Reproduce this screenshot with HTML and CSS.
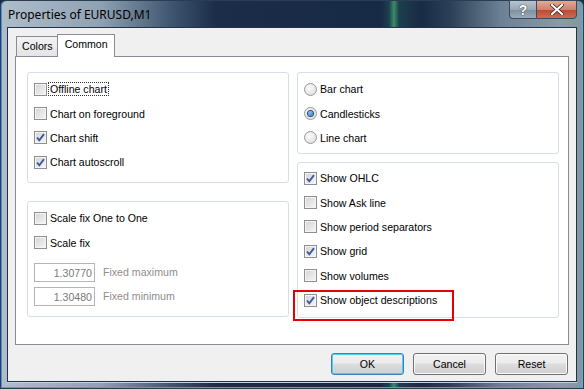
FILE: index.html
```html
<!DOCTYPE html>
<html>
<head>
<meta charset="utf-8">
<link rel="stylesheet" href="styles.css">
</head>
<body>
<div class="window">
  <div class="titlebar">
    <div class="title">Properties of EURUSD,M1</div>
    <div class="caption-btns">
      <div class="cap help">?</div>
      <div class="cap close">
        <svg width="14" height="11" viewBox="0 0 14 11"><path d="M2 1 L12 10 M12 1 L2 10" stroke="#3a1a14" stroke-width="3.6" stroke-linecap="square"/><path d="M2 1 L12 10 M12 1 L2 10" stroke="#fff" stroke-width="2.2" stroke-linecap="square"/></svg>
      </div>
    </div>
  </div>
  <div class="client">
    <div class="tabs">
      <div class="tab">Colors</div>
      <div class="tab active">Common</div>
    </div>
    <div class="panel">
      <div class="col">
        <div class="group g-left1">
          <label class="row"><span class="cb"></span><span class="focus">Offline chart</span></label>
          <label class="row"><span class="cb"></span><span>Chart on foreground</span></label>
          <label class="row"><span class="cb checked"><svg width="11" height="11" viewBox="0 0 11 11"><path d="M2 5.5 L4.3 8.3 L9 2.2" fill="none" stroke="#3d58a0" stroke-width="1.9"/></svg></span><span>Chart shift</span></label>
          <label class="row"><span class="cb checked"><svg width="11" height="11" viewBox="0 0 11 11"><path d="M2 5.5 L4.3 8.3 L9 2.2" fill="none" stroke="#3d58a0" stroke-width="1.9"/></svg></span><span>Chart autoscroll</span></label>
        </div>
        <div class="group g-left2">
          <label class="row"><span class="cb"></span><span>Scale fix One to One</span></label>
          <label class="row"><span class="cb"></span><span>Scale fix</span></label>
          <div class="fields">
            <div class="field"><span class="input">1.30770</span><span class="flabel">Fixed maximum</span></div>
            <div class="field"><span class="input">1.30480</span><span class="flabel">Fixed minimum</span></div>
          </div>
        </div>
      </div>
      <div class="col">
        <div class="group g-right1">
          <label class="row"><span class="rb"></span><span>Bar chart</span></label>
          <label class="row"><span class="rb on"></span><span>Candlesticks</span></label>
          <label class="row"><span class="rb"></span><span>Line chart</span></label>
        </div>
        <div class="group g-right2">
          <label class="row"><span class="cb checked"><svg width="11" height="11" viewBox="0 0 11 11"><path d="M2 5.5 L4.3 8.3 L9 2.2" fill="none" stroke="#3d58a0" stroke-width="1.9"/></svg></span><span>Show OHLC</span></label>
          <label class="row"><span class="cb"></span><span>Show Ask line</span></label>
          <label class="row"><span class="cb"></span><span>Show period separators</span></label>
          <label class="row"><span class="cb checked"><svg width="11" height="11" viewBox="0 0 11 11"><path d="M2 5.5 L4.3 8.3 L9 2.2" fill="none" stroke="#3d58a0" stroke-width="1.9"/></svg></span><span>Show grid</span></label>
          <label class="row"><span class="cb"></span><span>Show volumes</span></label>
          <label class="row"><span class="cb checked"><svg width="11" height="11" viewBox="0 0 11 11"><path d="M2 5.5 L4.3 8.3 L9 2.2" fill="none" stroke="#3d58a0" stroke-width="1.9"/></svg></span><span>Show object descriptions</span></label>
          <div class="highlight"></div>
        </div>
      </div>
    </div>
    <div class="buttons">
      <div class="btn default">OK</div>
      <div class="btn">Cancel</div>
      <div class="btn">Reset</div>
    </div>
  </div>
</div>
</body>
</html>
```

FILE: styles.css
```css
* { box-sizing: border-box; }
html, body { margin: 0; padding: 0; }
body {
  width: 584px;
  height: 389px;
  overflow: hidden;
  font-family: "Liberation Sans", Arial, sans-serif;
  font-size: 10.6px;
  color: #000;
  background: #1a2b44;
}
.window {
  width: 584px;
  height: 389px;
  display: flex;
  flex-direction: column;
  background:
    linear-gradient(90deg, #aebdca 0px, #8fa2b3 100px, #3f5670 170px, #1b2d48 215px, #172a45 380px, #1d3f4c 388px, #3a8c6a 393px, #1d3f4c 398px, #182b45 420px, #2c4058 450px, #6d8195 500px, #8a9aaa 560px, #7f97a0 584px);
  border: 1px solid #2b3d52;
  border-radius: 6px 6px 0 0;
  box-shadow: inset 1px 0 0 #4e8fd8, inset -1px 0 0 #33c0e0, inset 0 -1px 0 #33b0d0;
}
.titlebar {
  height: 26px;
  display: flex;
  justify-content: space-between;
  align-items: flex-start;
  flex-shrink: 0;
}
.title {
  font-family: "Noto Sans", "Liberation Sans", sans-serif;
  font-size: 12px;
  padding: 5px 0 0 7px;
  color: #000;
}
.caption-btns {
  display: flex;
  margin-right: 6px;
  margin-top: -1px;
}
.cap {
  height: 19px;
  border: 1px solid #3c4b5c;
  display: flex;
  align-items: center;
  justify-content: center;
  color: #fff;
  font-weight: bold;
  font-family: "Liberation Sans", Arial, sans-serif;
}
.help {
  width: 27px;
  border-radius: 0 0 0 4px;
  background: linear-gradient(#b8c4cf, #98a8b6 50%, #7d8e9e 51%, #9aaab8);
  font-size: 14px;
  text-shadow: 0 0 1px #333, 0 0 1px #333;
  border-right: none;
}
.close {
  width: 41px;
  border-radius: 0 0 4px 0;
  background: linear-gradient(#e3a899, #d0806c 50%, #b84a33 51%, #cf6c52);
}
.client {
  margin: 0 6px 6px 6px;
  flex: 1;
  background: #f0f0f0;
  border: 1px solid #23324a;
  box-shadow: 0 1px 0 #c8d2dc;
  padding: 6px 7px 0 7px;
  display: flex;
  flex-direction: column;
}
.tabs {
  display: flex;
  align-items: flex-end;
  height: 22px;
  padding-left: 1px;
  position: relative;
  z-index: 1;
}
.tab {
  height: 20px;
  padding: 3px 4px 0 5px;
  border: 1px solid #898c95;
  border-bottom: none;
  background: linear-gradient(#f2f2f2, #e4e4e4);
}
.tab.active {
  height: 23px;
  padding: 3px 6px 0 7px;
  background: #fff;
  margin-left: -1px;
  margin-bottom: -1px;
}
.panel {
  height: 289px;
  background: #fff;
  border: 1px solid #898c95;
  display: flex;
  gap: 8px;
  padding: 15px 0 0 11px;
}
.col {
  width: 262px;
  display: flex;
  flex-direction: column;
}
.group {
  border: 1px solid #d5dfe5;
  border-radius: 3px;
  position: relative;
}
.g-left1 { height: 111px; padding: 4px 0 0 6px; }
.g-left2 { height: 116px; margin-top: 18px; padding: 4px 0 0 6px; }
.g-right1 { height: 82px; padding: 4px 0 0 6px; }
.g-right2 { height: 156px; margin-top: 8px; padding: 3px 0 0 6px; }
.row {
  height: 24.4px;
  display: flex;
  align-items: center;
  gap: 3px;
  white-space: nowrap;
}
.cb {
  width: 13px;
  height: 13px;
  border: 1px solid #8e8f8f;
  background: linear-gradient(135deg, #d4d4d4, #f6f6f6);
  box-shadow: inset 0 0 0 1px #f4f4f4;
  display: flex;
  align-items: center;
  justify-content: center;
  flex-shrink: 0;
}
.cb svg { display: block; }
.focus {
  outline: 1px dotted #333;
  outline-offset: 0px;
  padding: 0 1px;
  margin-left: -1px;
}
.rb {
  width: 13px;
  height: 13px;
  border-radius: 50%;
  border: 1px solid #9a9a9a;
  background: radial-gradient(circle at 40% 35%, #fafafa, #d9d9d9);
  flex-shrink: 0;
  display: flex;
  align-items: center;
  justify-content: center;
}
.rb.on::after {
  content: "";
  width: 5px;
  height: 5px;
  border-radius: 50%;
  background: radial-gradient(circle at 40% 35%, #8ac6f5, #1e63b4);
  box-shadow: 0 0 0 1px #2b4c70;
}
.fields {
  margin-top: 8px;
  display: flex;
  flex-direction: column;
  gap: 5px;
}
.field {
  display: flex;
  align-items: center;
  gap: 8px;
}
.input {
  width: 61px;
  height: 19px;
  border: 1px solid #b4b4b4;
  text-align: right;
  padding: 3px 2px 0 0;
  color: #7a7a7a;
  background: #fff;
}
.flabel { color: #8d8d8d; }
.highlight {
  position: absolute;
  left: -5px;
  top: 127px;
  width: 161px;
  height: 31px;
  border: 2px solid #e60000;
}
.buttons {
  display: flex;
  justify-content: flex-end;
  gap: 9px;
  padding: 8px 1px 0 0;
}
.btn {
  width: 73px;
  height: 22px;
  border: 1px solid #707070;
  border-radius: 3px;
  background: linear-gradient(#f2f2f2 0, #ebebeb 45%, #dddddd 50%, #cfcfcf 100%);
  box-shadow: inset 0 0 0 1px #fbfbfb;
  display: flex;
  align-items: center;
  justify-content: center;
}
.btn.default {
  border-color: #3c7fb1;
  box-shadow: inset 0 0 0 1px #48d0f8;
}
```
